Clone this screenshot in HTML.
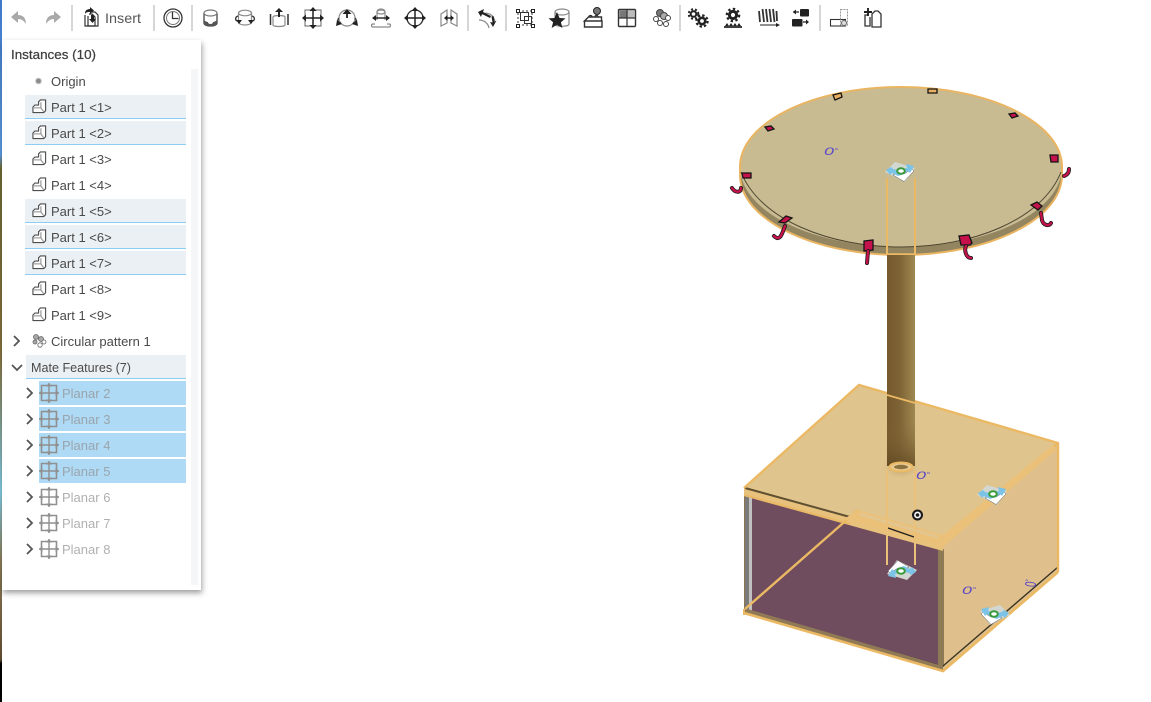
<!DOCTYPE html>
<html lang="en">
<head>
<meta charset="utf-8">
<title>Assembly</title>
<style>
html,body{margin:0;padding:0;background:#fff;width:1151px;height:702px;overflow:hidden}
svg{display:block;font-family:"Liberation Sans",sans-serif}
.t{font-size:13px;fill:#4a4a4a}
.d{font-size:13px;fill:#b0b0b0}
.ds{font-size:13px;fill:#9aa5ad}
.deg{font-size:12px;fill:#5a48c8;font-style:italic}
.ic{fill:none;stroke:#333;stroke-width:1.3}
.g{fill:none;stroke:#8a8a8a;stroke-width:1.2}
</style>
</head>
<body>
<svg width="1151" height="702" viewBox="0 0 1151 702" xmlns="http://www.w3.org/2000/svg">
<defs>
<filter id="sh" x="-10%" y="-10%" width="120%" height="120%"><feDropShadow dx="1" dy="3" stdDeviation="3" flood-color="#000" flood-opacity=".38"/></filter>
<linearGradient id="shaft" x1="0" x2="1" y1="0" y2="0"><stop offset="0" stop-color="#76592c"/><stop offset=".45" stop-color="#7e6336"/><stop offset="1" stop-color="#a08850"/></linearGradient>
<linearGradient id="shadeb" x1="0" x2="0" y1="0" y2="1"><stop offset="0" stop-color="#8a6d3c" stop-opacity="0"/><stop offset="1" stop-color="#5e4620" stop-opacity=".75"/></linearGradient>
<radialGradient id="pool"><stop offset="0" stop-color="#8d7240" stop-opacity=".75"/><stop offset="1" stop-color="#e0c48e" stop-opacity="0"/></radialGradient>
<linearGradient id="edge" x1="0" x2="0" y1="0" y2="1"><stop offset="0" stop-color="#3f78c8"/><stop offset=".22" stop-color="#5a9ae0"/><stop offset=".24" stop-color="#6d6a30"/><stop offset=".5" stop-color="#84703c"/><stop offset=".7" stop-color="#7ec8e0"/><stop offset=".8" stop-color="#8a7a55"/><stop offset=".94" stop-color="#5c4a30"/><stop offset=".945" stop-color="#000"/><stop offset="1" stop-color="#000"/></linearGradient>

<symbol id="part" viewBox="0 0 16 16" overflow="visible"><path d="M1 14.500V8.500L3 6.500H7V3L9 1H14.500V12.500L12.500 14.500Z" fill="#fff" stroke="#4e4e4e" stroke-width="1.200" stroke-linejoin="round"/><path d="M2 9.500H9.500V3.500M9.500 9.500L12.500 13.500" fill="none" stroke="#8a8a8a" stroke-width="1.100"/></symbol>

<symbol id="planar" viewBox="0 0 20 20" overflow="visible"><path d="M2.500 2.500h15v15h-15z" fill="none" stroke="#909090" stroke-width="1.600"/><path d="M10 0v20M0 10h20" stroke="#909090" stroke-width="1.400"/><path d="M10 0l3 3.500h-6zM10 20l3-3.500h-6zM0 10l3.500-3v6zM20 10l-3.500-3v6z" fill="#909090"/></symbol>

<g id="triad">
<path d="M-16 0L-6-10 14-4 4 10z" fill="#d2d7d2"/>
<path d="M-8 3L3 9.500 13-1 11-3 3 2-3 1z" fill="#fff" stroke="#555" stroke-width=".5"/>
<path d="M-15-2L-10-5-8-3-3-2 1-3 6-4 5-8 13-6 9 1 7-1 3 2-3 4-9 1-11 3z" fill="#7cc3e8"/>
<ellipse cx="0" cy="-1" rx="3.800" ry="2.800" fill="#fff" stroke="#3a9a3a" stroke-width="2"/>
</g>
</defs>

<!-- left edge strip -->
<rect x="0" y="0" width="2" height="702" fill="url(#edge)"/>

<!-- ============== DISK ============== -->
<ellipse cx="901" cy="175" rx="161" ry="80" fill="#93855f"/>
<path d="M740 175C740 219 812 255 901 255S1062 219 1062 175" fill="none" stroke="#eab562" stroke-width="2"/>
<ellipse cx="901" cy="167" rx="161" ry="80" fill="#c8bb92"/>
<path d="M740 175V167C740 123 812 87 901 87S1062 123 1062 167V175" fill="none" stroke="#eab562" stroke-width="2"/>
<path d="M741 172C760 220 830 247 901 247S1042 220 1061 172" fill="none" stroke="#4e4630" stroke-width="1"/>

<!-- clips on disk -->
<g stroke="#141414" stroke-width="1.300" fill="#c5124a">
<path d="M833 95l8-2 1 4-7 3z" fill="#e8b060"/>
<path d="M928 89h9v4h-9z" fill="#e8b060"/>
<path d="M1009 114l6-1 3 3-6 2z"/>
<path d="M1050 155h8v7h-7z"/>
<path d="M1031 205l6-3 5 4-4 4z"/>
<path d="M959 236l10-1 3 8-2 2h-9z"/>
<path d="M864 241l9-1 0 10-9 1z"/>
<path d="M779 222l7-6 6 2-7 5z"/>
<path d="M742 173h9v5h-8z"/>
<path d="M765 127l6-1 3 3-6 2z"/>
</g>
<g fill="none" stroke="#1c1c1c" stroke-width="4" stroke-linecap="round">
<path d="M1041 213l1 7c1 5 7 7 9 3M966 246c-2 4 0 12 5 12M868 251l-1 12M785 226c-2 5-3 9-5 11-2 2-4 1-6-1M741 188c0 5-6 5-9 0M1069 169c0 4-2 6-5 7"/>
</g>
<g fill="none" stroke="#c5124a" stroke-width="2.400" stroke-linecap="round">
<path d="M1041 213l1 7c1 5 7 7 9 3M966 246c-2 4 0 12 5 12M868 251l-1 12M785 226c-2 5-3 9-5 11-2 2-4 1-6-1M741 188c0 5-6 5-9 0M1069 169c0 4-2 6-5 7"/>
</g>

<!-- ============== BOX ============== -->
<path d="M744 488L859 385 1058 443 943 545z" fill="#e0c48e"/>
<path d="M943 545L1058 443V572L943 671z" fill="#dfc08c"/>
<path d="M744 488L943 545V671L744 613z" fill="#8b7550"/>
<path d="M752 494L938 548V665L752 612z" fill="#6f4c5e"/>
<path d="M745 491h4v121h-4z" fill="#7a7a7a"/>
<path d="M749 493h3v119h-3z" fill="#c0c0c0"/>
<path d="M938 549h6v118h-6z" fill="#8d7a55"/>
<!-- front top lip -->
<path d="M744 486L943 543V551L744 496z" fill="#e8c27c"/>
<path d="M745 488L850 517" stroke="#5e5033" stroke-width="2" fill="none"/>
<path d="M744 495L850 524" stroke="#e9b968" stroke-width="2.200" fill="none"/>
<!-- bottom edge -->
<path d="M752 612L938 665" stroke="#1c1c1c" stroke-width="1.200" fill="none"/>
<path d="M744 608V614L943 671V666z" fill="#8f7a55"/>
<path d="M744 613L943 671 1058 572" fill="none" stroke="#ebb964" stroke-width="2.600"/>
<path d="M943 666L1058 567" fill="none" stroke="#3c3420" stroke-width="1.400"/>
<!-- outlines -->
<path d="M744 488L859 385 1058 443V572" fill="none" stroke="#ebb964" stroke-width="2.400"/>
<path d="M943 545L1058 443" stroke="#ebb964" stroke-width="2.400" fill="none"/>
<!-- see-through plate -->
<path d="M745 609L858 510" stroke="#ebb964" stroke-width="2.400" fill="none"/>
<path d="M858 510L943 535 1053 445 1056 450 943 547 844 519z" fill="#ebc078"/>
<path d="M860 514L938 537" stroke="#e3c58f" stroke-width="3" fill="none"/>
<path d="M744 609v6" stroke="#ebb964" stroke-width="2"/>
<path d="M888 528L914 537" stroke="#222" stroke-width="1.400" fill="none"/>

<!-- shaft -->
<ellipse cx="901" cy="466" rx="20" ry="14" fill="url(#pool)"/>
<rect x="887" y="255" width="28" height="211" fill="url(#shaft)"/>
<rect x="887" y="420" width="28" height="46" fill="url(#shadeb)"/>
<path d="M887 254h28" stroke="#ebb964" stroke-width="1.500"/>
<path d="M887 395L915 403" stroke="#ebb964" stroke-width="1.800"/>
<ellipse cx="901" cy="467" rx="11.500" ry="4.500" fill="#e8c990" stroke="#ebb964" stroke-width="2"/>
<ellipse cx="901" cy="467" rx="7" ry="2.200" fill="#8c7240"/>

<!-- axis lines -->
<path d="M887 178V255M915 178V255" stroke="#ebb964" stroke-width="2" fill="none"/>
<path d="M887 470V565M915 470V565" stroke="#ebc078" stroke-width="2" fill="none"/>

<!-- mate connectors -->
<use href="#triad" transform="translate(901 172)"/>
<use href="#triad" transform="translate(993 495) scale(1 1)"/>
<use href="#triad" transform="translate(901 570) rotate(180)"/>
<use href="#triad" transform="translate(994 615) scale(-1 1)"/>

<!-- target -->
<circle cx="917.500" cy="515" r="5.500" fill="#1a1a1a"/>
<circle cx="917.500" cy="515" r="3.400" fill="#fff"/>
<circle cx="917.500" cy="515" r="1.800" fill="#1a1a1a"/>

<!-- 0° labels -->
<text class="deg" transform="translate(824 155) scale(1.500 .9)">0<tspan font-size="7" dy="-3">°</tspan></text>
<text class="deg" transform="translate(916 479) scale(1.500 .9)">0<tspan font-size="7" dy="-3">°</tspan></text>
<text class="deg" transform="translate(962 594) scale(1.500 .9)">0<tspan font-size="7" dy="-3">°</tspan></text>
<text class="deg" transform="translate(1036 587) rotate(-90) scale(.8 1.300)">0<tspan font-size="7" dy="-3">°</tspan></text>

<!-- ============== PANEL ============== -->
<rect x="2" y="40" width="199" height="550" fill="#fff" filter="url(#sh)"/>
<rect x="191" y="69" width="7" height="516" fill="#f5f6f8"/>
<text x="11" y="59" font-size="13" fill="#3f3f3f" stroke="#3f3f3f" stroke-width=".25" textLength="85" lengthAdjust="spacingAndGlyphs">Instances (10)</text>

<!-- Origin -->
<circle cx="38.500" cy="81" r="2.800" fill="#8a8a8a" stroke="#c2c2c2" stroke-width="1"/>
<text class="t" x="51" y="86">Origin</text>

<!-- selection bands -->
<g fill="#ebf0f4">
<rect x="25" y="95" width="161" height="23"/><rect x="25" y="121" width="161" height="23"/>
<rect x="25" y="199" width="161" height="23"/><rect x="25" y="225" width="161" height="23"/><rect x="25" y="251" width="161" height="23"/>
<rect x="26" y="355" width="160" height="23"/>
</g>
<g fill="#8ccdf3">
<rect x="25" y="118" width="161" height="1"/><rect x="25" y="144" width="161" height="1"/>
<rect x="25" y="222" width="161" height="1"/><rect x="25" y="248" width="161" height="1"/><rect x="25" y="274" width="161" height="1"/>
<rect x="26" y="378" width="160" height="1"/>
</g>
<g fill="#aedaf5">
<rect x="39" y="381" width="147" height="24"/><rect x="39" y="407" width="147" height="24"/><rect x="39" y="433" width="147" height="24"/><rect x="39" y="459" width="147" height="24"/>
</g>

<!-- part rows -->
<use href="#part" x="32" y="99" width="15" height="15"/>
<use href="#part" x="32" y="125" width="15" height="15"/>
<use href="#part" x="32" y="151" width="15" height="15"/>
<use href="#part" x="32" y="177" width="15" height="15"/>
<use href="#part" x="32" y="203" width="15" height="15"/>
<use href="#part" x="32" y="229" width="15" height="15"/>
<use href="#part" x="32" y="255" width="15" height="15"/>
<use href="#part" x="32" y="281" width="15" height="15"/>
<use href="#part" x="32" y="307" width="15" height="15"/>
<text class="t" x="51" y="112">Part 1 &lt;1&gt;</text>
<text class="t" x="51" y="138">Part 1 &lt;2&gt;</text>
<text class="t" x="51" y="164">Part 1 &lt;3&gt;</text>
<text class="t" x="51" y="190">Part 1 &lt;4&gt;</text>
<text class="t" x="51" y="216">Part 1 &lt;5&gt;</text>
<text class="t" x="51" y="242">Part 1 &lt;6&gt;</text>
<text class="t" x="51" y="268">Part 1 &lt;7&gt;</text>
<text class="t" x="51" y="294">Part 1 &lt;8&gt;</text>
<text class="t" x="51" y="320">Part 1 &lt;9&gt;</text>

<!-- pattern -->
<path d="M14 336l5 5-5 5" fill="none" stroke="#555" stroke-width="1.800"/>
<g fill="#a8a8a8" stroke="#666" stroke-width=".8"><circle cx="36" cy="337" r="2.500"/><circle cx="41" cy="339" r="2.500"/><circle cx="35" cy="342" r="2"/><circle cx="40" cy="345" r="2.200" fill="#fff"/><circle cx="44" cy="342" r="2" fill="#fff"/></g>
<text class="t" x="51" y="346">Circular pattern 1</text>

<!-- mate features -->
<path d="M12 365l5 5 5-5" fill="none" stroke="#555" stroke-width="1.800"/>
<text class="t" x="31" y="372" textLength="100" lengthAdjust="spacingAndGlyphs">Mate Features (7)</text>

<!-- planar rows -->
<g fill="none" stroke="#555" stroke-width="1.800">
<path d="M27 388l5 5-5 5M27 414l5 5-5 5M27 440l5 5-5 5M27 466l5 5-5 5M27 492l5 5-5 5M27 518l5 5-5 5M27 544l5 5-5 5"/>
</g>
<use href="#planar" x="39" y="383" width="20" height="20"/>
<use href="#planar" x="39" y="409" width="20" height="20"/>
<use href="#planar" x="39" y="435" width="20" height="20"/>
<use href="#planar" x="39" y="461" width="20" height="20"/>
<use href="#planar" x="39" y="487" width="20" height="20"/>
<use href="#planar" x="39" y="513" width="20" height="20"/>
<use href="#planar" x="39" y="539" width="20" height="20"/>
<text class="ds" x="62" y="398">Planar 2</text>
<text class="ds" x="62" y="424">Planar 3</text>
<text class="ds" x="62" y="450">Planar 4</text>
<text class="ds" x="62" y="476">Planar 5</text>
<text class="d" x="62" y="502">Planar 6</text>
<text class="d" x="62" y="528">Planar 7</text>
<text class="d" x="62" y="554">Planar 8</text>

<!-- ============== TOOLBAR ============== -->
<g fill="#d6d6d6">
<rect x="71" y="5" width="2" height="26"/><rect x="153" y="5" width="2" height="26"/><rect x="191" y="5" width="2" height="26"/>
<rect x="467" y="5" width="2" height="26"/><rect x="505" y="5" width="2" height="26"/><rect x="679" y="5" width="2" height="26"/><rect x="819" y="5" width="2" height="26"/>
</g>
<!-- undo / redo -->
<path d="M11 17l7-6v4c5 0 8 3 8 9-2-3-4-5-8-5v4z" fill="#a9a9a9"/>
<path d="M61 17l-7-6v4c-5 0-8 3-8 9 2-3 4-5 8-5v4z" fill="#a9a9a9"/>
<!-- insert -->
<path d="M85 15v11h10v-9l-3-3h-3" fill="none" stroke="#333" stroke-width="1.200"/>
<path d="M88 16v10h10V15l-3-3h-3" fill="none" stroke="#333" stroke-width="1.200"/>
<path d="M85 13c0-3 3-4 5-4V7l4 3.500-4 3.500v-2c-2 0-4 0-5 2z" fill="#222"/>
<path d="M91 15h3v4h2l-3.500 4-3.500-4h2z" fill="#222"/>
<text x="105" y="23" font-size="14" fill="#555" textLength="36" lengthAdjust="spacingAndGlyphs">Insert</text>
<!-- clock -->
<circle cx="173" cy="18" r="9" fill="none" stroke="#333" stroke-width="1.300"/>
<circle cx="173" cy="18" r="6.500" fill="none" stroke="#777" stroke-width="1"/>
<path d="M172.500 12v6.500h6" fill="none" stroke="#333" stroke-width="1.300"/>
<!-- fastened -->
<path d="M204 13v10c0 4 13 4 13 0V13" fill="#fff" stroke="#444" stroke-width="1.300"/>
<ellipse cx="210.500" cy="13" rx="6.500" ry="3" fill="#fff" stroke="#777" stroke-width="1.200"/>
<path d="M204 20c2 2 4 2 4 2s0 2 2.500 2 2.500-2 2.500-2 2 0 4-2v3c0 4-13 4-13 0z" fill="#555"/>
<!-- revolute -->
<ellipse cx="245" cy="13" rx="6.500" ry="2.800" class="g"/>
<path d="M238.500 13v9c0 4 13 4 13 0v-9" class="g"/>
<path d="M238 16c-3 1-3 4-1 5" class="ic"/><path d="M252 16c3 1 3 4 1 5" class="ic"/>
<path d="M236 20l6 0-3 4zM254 20l-6 0 3 4z" fill="#222"/>
<!-- slider -->
<path d="M270.500 14v11M288 14v11" stroke="#333" stroke-width="1.500"/>
<path d="M273 17c0-2 12-2 12 0v8c0 2-12 2-12 0z" class="g"/>
<path d="M279 8l4 4h-3v5h-2v-5h-3z" fill="#222"/>
<!-- planar -->
<rect x="305" y="10" width="16" height="16" fill="#fff" stroke="#666" stroke-width="1"/>
<path d="M313 8v20M303 18h20" stroke="#222" stroke-width="1.500"/>
<path d="M313 7l3.500 4h-7zM313 29l3.500-4h-7zM302 18l4-3.500v7zM324 18l-4-3.500v7z" fill="#222"/>
<!-- 347 -->
<ellipse cx="347" cy="18" rx="8" ry="8" class="g"/>
<path d="M347 9l4.500 5h-9z" fill="#222"/><path d="M347 13v5" stroke="#222" stroke-width="1.800"/>
<path d="M339 18c-2 2-1 5 2 5M355 18c2 2 1 5-2 5" class="ic"/>
<path d="M337 20l5 4-6 2zM357 20l-5 4 6 2z" fill="#222"/>
<!-- 381 -->
<path d="M377 20V12c0-4 8-4 8 0v8" class="g"/>
<ellipse cx="381" cy="12" rx="4" ry="2" class="g"/>
<path d="M375 24h-2c-2 0-2 3 0 3h16c2 0 2-3 0-3h-2" class="g"/>
<path d="M373 18h16" stroke="#222" stroke-width="1.400"/><path d="M372 18l4-3v6zM390 18l-4-3v6z" fill="#222"/>
<!-- 415 -->
<circle cx="415" cy="18" r="8" fill="none" stroke="#333" stroke-width="1.300"/>
<path d="M415 8v20M405 18h20" stroke="#222" stroke-width="1.500"/>
<path d="M415 7l3.500 4h-7zM415 29l3.500-4h-7zM404 18l4-3.500v7zM426 18l-4-3.500v7z" fill="#222"/>
<!-- 449 -->
<path d="M441 14l6-4v13l-6 3zM457 14v12l-6-3V10z" class="g"/>
<path d="M445 18h8" stroke="#222" stroke-width="1.500"/><path d="M444 18l3.500-3v6zM454 18l-3.500-3v6z" fill="#222"/>
<!-- 487 -->
<path d="M480 15c7-4 14-1 15 7M479 20c5 0 9 3 10 8" class="g"/>
<path d="M478 12l6-3-1 3 8 4-1 2-8-4-1 3z" fill="#222"/>
<path d="M493 27l-3-5 2.500.5-1-6 2-.5 1 6 2-1.500z" fill="#222"/>
<!-- 525 -->
<rect x="518" y="11" width="14" height="14" fill="none" stroke="#333" stroke-width="1" stroke-dasharray="2 2"/>
<g fill="#fff" stroke="#222" stroke-width="1"><rect x="516.500" y="9.500" width="3" height="3"/><rect x="531.500" y="9.500" width="3" height="3"/><rect x="516.500" y="24.500" width="3" height="3"/><rect x="531.500" y="24.500" width="3" height="3"/></g>
<rect x="520.500" y="12.500" width="8" height="8" class="ic" style="stroke-width:1"/><rect x="524.500" y="16.500" width="7" height="7" class="ic" style="stroke-width:1"/>
<!-- 560 star -->
<ellipse cx="562" cy="12" rx="7" ry="3" class="g"/>
<path d="M555 12v12c0 3 14 3 14 0V12" class="g"/>
<path d="M557 12l2.500 6 6 .4-4.600 3.800 1.500 5.800-5.400-3.200-5.400 3.200 1.500-5.800-4.600-3.800 6-.4z" fill="#222"/>
<!-- 593 -->
<circle cx="597" cy="11" r="3.500" fill="#777" stroke="#222" stroke-width="1"/>
<path d="M584.500 21l4-4h13v4zM584.500 21h17.500v6h-17.500z" fill="#fff" stroke="#333" stroke-width="1.400"/>
<path d="M589 17c0-2 3-2 3 0M595 17c0-2 3-2 3 0" class="ic"/>
<!-- 627 -->
<rect x="618.500" y="9.500" width="17" height="17" rx="1" fill="#fff" stroke="#333" stroke-width="1.400"/>
<rect x="619.500" y="10.500" width="7" height="7" fill="#777"/><rect x="627.500" y="10.500" width="7" height="7" fill="#bbb"/>
<path d="M627 9v18M618 18h18" stroke="#333" stroke-width="1.200"/>
<!-- 661 -->
<g stroke="#444" stroke-width="1" fill="#fff"><circle cx="660" cy="13" r="3.500" fill="#777"/><circle cx="664" cy="16" r="3.500" fill="#aaa"/><circle cx="668" cy="18" r="2.500"/><circle cx="656" cy="19" r="2.500"/><circle cx="660" cy="23" r="2.500"/><circle cx="666" cy="24" r="2.500"/></g>
<!-- 699 gears -->
<circle cx="693.500" cy="14" r="2.800" fill="none" stroke="#222" stroke-width="2"/>
<circle cx="693.500" cy="14" r="4.800" fill="none" stroke="#222" stroke-width="2" stroke-dasharray="2 2"/>
<circle cx="702" cy="21" r="3.200" fill="none" stroke="#222" stroke-width="2.600"/>
<circle cx="702" cy="21" r="5.600" fill="none" stroke="#222" stroke-width="2.200" stroke-dasharray="2.400 2"/>
<!-- 733 -->
<circle cx="733" cy="15" r="3.600" fill="none" stroke="#222" stroke-width="3"/>
<circle cx="733" cy="15" r="6.200" fill="none" stroke="#222" stroke-width="2.200" stroke-dasharray="2.400 2.400"/>
<path d="M724 27h18" stroke="#222" stroke-width="1.800"/><path d="M725 26l2-3 2 3 2-3 2 3 2-3 2 3 2-3 2 3z" fill="#222"/>
<!-- 767 coil -->
<g stroke="#333" stroke-width="1.800" fill="none"><path d="M759 11l1 11M762.500 9l1.500 13M766 9l1.500 13M769.500 9l1.500 13M773 9l1.500 13M776.500 11l.5 10"/></g>
<path d="M760 25h17" stroke="#222" stroke-width="1"/><path d="M780 25l-4-2v4z" fill="#222"/>
<!-- 801 -->
<rect x="800" y="9" width="9" height="7.500" rx="1" fill="#222"/><rect x="792" y="19" width="10.500" height="7.500" rx="1" fill="#222"/>
<path d="M793 12h6M803 22h5" stroke="#222" stroke-width="1.200"/><path d="M793 12l3-2.500v5zM809 22l-3-2.500v5z" fill="#222"/>
<!-- 839 -->
<rect x="830.500" y="19.500" width="15" height="6.500" fill="#fff" stroke="#333" stroke-width="1.100"/>
<rect x="840.500" y="9.500" width="7" height="16" fill="none" stroke="#999" stroke-width="1" stroke-dasharray="2 1"/>
<circle cx="844" cy="23" r="2.500" fill="#ddd" stroke="#666" stroke-width="1"/>
<!-- 873 -->
<path d="M868 15h-3v11h5v-9" class="ic"/>
<path d="M872 14l3-3h3l3 3v13h-9z" fill="#fff" stroke="#333" stroke-width="1.300"/>
<path d="M868 8v8M864 12h8" stroke="#222" stroke-width="1.900"/>
</svg>
</body>
</html>
